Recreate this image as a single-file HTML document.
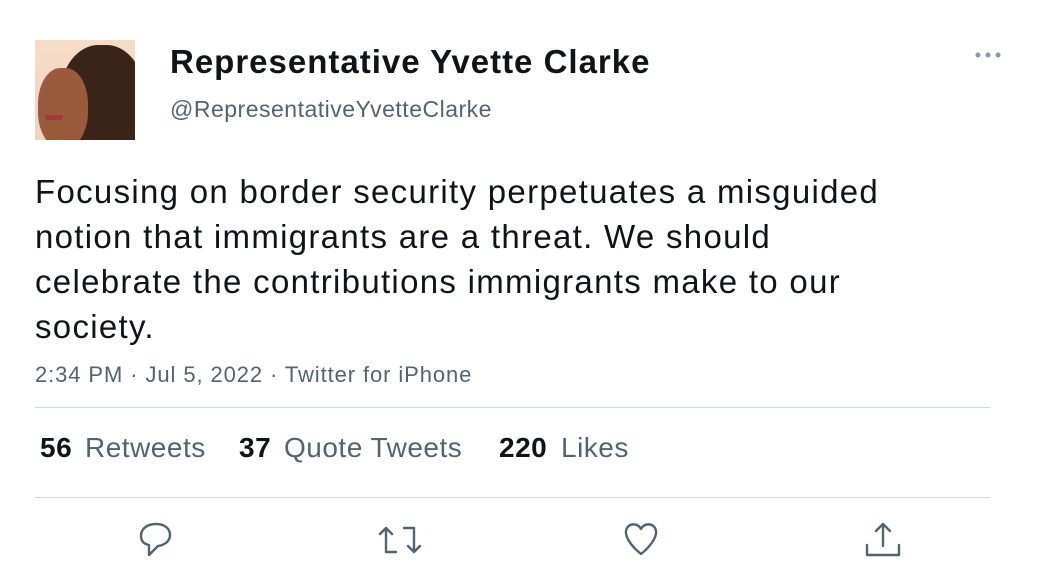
<!DOCTYPE html>
<html><head><style>
body{margin:0;width:1050px;height:570px;background:#fff;font-family:"Liberation Sans",Arial,sans-serif;position:relative;overflow:hidden}
.a{position:absolute;white-space:nowrap}
.avatar{left:35px;top:40px;width:100px;height:100px;overflow:hidden;background:linear-gradient(#f6dcc8,#f1d2bd)}
.name{left:170px;top:43px;font-size:33px;font-weight:bold;color:#0f1419;letter-spacing:1px}
.handle{left:170px;top:96px;font-size:23px;color:#536471;letter-spacing:0.5px}
.body{left:35px;top:169px;font-size:33px;line-height:45px;color:#0f1419;letter-spacing:1.3px}
.time{left:35px;top:362px;font-size:22px;color:#536471;letter-spacing:0.9px}
.hr{left:35px;width:955px;height:1px;background:#cfd9de}
.st{top:432px;font-size:28px;color:#536471;letter-spacing:0.5px}
.st b{color:#0f1419}
svg{position:absolute;fill:none;stroke:#536471;stroke-width:2.4;stroke-linecap:round;stroke-linejoin:round}
</style></head><body>
<div class="a avatar">
<div class="a" style="left:25px;top:5px;width:85px;height:115px;border-radius:45%;background:#3a2418"></div>
<div class="a" style="left:3px;top:28px;width:50px;height:80px;border-radius:45%;background:#9a5a3c"></div>
<div class="a" style="left:10px;top:75px;width:18px;height:5px;border-radius:3px;background:#a33a3a"></div>
</div>
<div class="a name">Representative Yvette Clarke</div>
<div class="a handle">@RepresentativeYvetteClarke</div>
<svg style="left:974px;top:50px;stroke:none;fill:#8b98a5" width="28" height="10"><circle cx="4" cy="5" r="2.5"/><circle cx="14" cy="5" r="2.5"/><circle cx="24" cy="5" r="2.5"/></svg>
<div class="a body">Focusing on border security perpetuates a misguided<br>notion that immigrants are a threat. We should<br>celebrate the contributions immigrants make to our<br>society.</div>
<div class="a time">2:34 PM · Jul 5, 2022 · Twitter for iPhone</div>
<div class="a hr" style="top:407px"></div>
<div class="a st" style="left:40px"><b>56</b></div>
<div class="a st" style="left:85px">Retweets</div>
<div class="a st" style="left:239px"><b>37</b></div>
<div class="a st" style="left:284px">Quote Tweets</div>
<div class="a st" style="left:499px"><b>220</b></div>
<div class="a st" style="left:561px">Likes</div>
<div class="a hr" style="top:497px"></div>
<svg style="left:138px;top:522px" width="36" height="36" viewBox="0 0 36 36"><path d="M18 2C10 2 3 6 3 14c0 5 3 8 8 9v10l9-9c7-1 12-5 12-11C32 6 26 2 18 2z"/></svg>
<svg style="left:378px;top:522px" width="44" height="36" viewBox="0 0 44 36"><path d="M8 30V6M2 12l6-6 6 6M8 30h10M36 6v24M30 24l6 6 6-6M36 6H26"/></svg>
<svg style="left:622px;top:521px" width="38" height="36" viewBox="0 0 38 36"><path d="M19 8C16 2 8 2 5 7c-4 7 4 18 14 26 10-8 18-19 14-26-3-5-11-5-14 1z"/></svg>
<svg style="left:864px;top:520px" width="38" height="38" viewBox="0 0 38 38"><path d="M19 4v22M12 11l7-7 7 7M3 25v10h32V25"/></svg>
</body></html>
